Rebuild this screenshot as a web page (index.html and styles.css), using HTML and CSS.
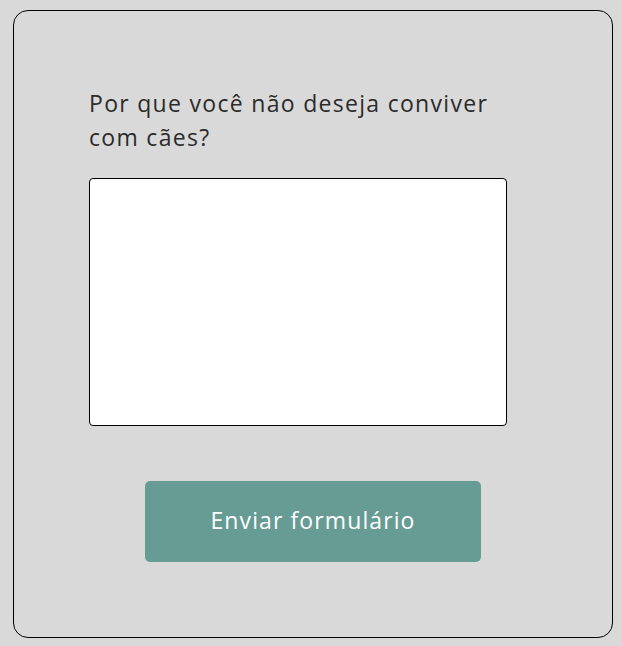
FILE: index.html
```html
<!DOCTYPE html>
<html lang="pt-BR">
<head>
<meta charset="utf-8">
<link rel="stylesheet" href="styles.css">
</head>
<body>
<form class="card">
  <label class="question" for="motivo">Por que você não deseja conviver com cães?</label>
  <textarea id="motivo" class="answer"></textarea>
  <div class="actions">
    <button type="button" class="submit">Enviar formulário</button>
  </div>
</form>
</body>
</html>
```
FILE: styles.css
```css
html, body {
  margin: 0;
  background: #d9d9d9;
}
body {
  padding: 10px 0 0 13px;
  font-family: "Open Sans", "Liberation Sans", sans-serif;
}
.card {
  box-sizing: border-box;
  width: 600px;
  height: 628px;
  border: 1px solid #000;
  border-radius: 15px;
  background: #d9d9d9;
  padding: 75px 0 0 75px;
  display: flex;
  flex-direction: column;
}
.question {
  display: block;
  width: 420px;
  font-size: 23px;
  line-height: 34px;
  letter-spacing: 1.3px;
  color: #2b2b2b;
}
.answer {
  box-sizing: border-box;
  margin-top: 24px;
  width: 418px;
  height: 248px;
  border: 1px solid #000;
  border-radius: 4px;
  background: #fff;
  resize: none;
  padding: 0;
}
.actions {
  display: flex;
  margin-top: 55px;
  padding-left: 56px;
}
.submit {
  width: 336px;
  height: 81px;
  border: none;
  border-radius: 5px;
  background: #679c95;
  color: #fff;
  font-family: inherit;
  font-size: 23px;
  letter-spacing: 1.1px;
  padding: 0 0 3px;
  cursor: pointer;
}
```
